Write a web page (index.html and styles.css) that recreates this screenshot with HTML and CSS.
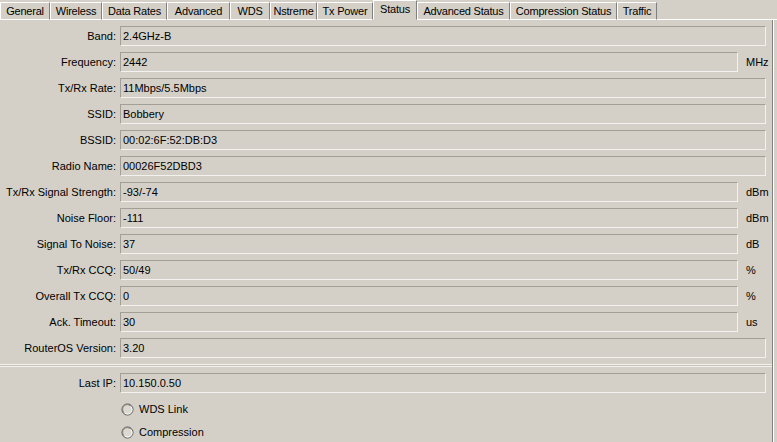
FILE: index.html
```html
<!DOCTYPE html>
<html>
<head>
<meta charset="utf-8">
<title>Interface Status</title>
<link rel="stylesheet" href="styles.css">
</head>
<body>
<div class="window">
  <div class="tabs">
    <div class="tab">General</div>
    <div class="tab">Wireless</div>
    <div class="tab">Data Rates</div>
    <div class="tab">Advanced</div>
    <div class="tab">WDS</div>
    <div class="tab">Nstreme</div>
    <div class="tab">Tx Power</div>
    <div class="tab active">Status</div>
    <div class="tab">Advanced Status</div>
    <div class="tab">Compression Status</div>
    <div class="tab">Traffic</div>
    <div class="tab-fill"></div>
  </div>
  <div class="panel">
    <div class="form">
      <label class="lbl">Band:</label><div class="field wide">2.4GHz-B</div>
      <label class="lbl">Frequency:</label><div class="field">2442</div><span class="unit">MHz</span>
      <label class="lbl">Tx/Rx Rate:</label><div class="field wide">11Mbps/5.5Mbps</div>
      <label class="lbl">SSID:</label><div class="field wide">Bobbery</div>
      <label class="lbl">BSSID:</label><div class="field wide">00:02:6F:52:DB:D3</div>
      <label class="lbl">Radio Name:</label><div class="field wide">00026F52DBD3</div>
      <label class="lbl">Tx/Rx Signal Strength:</label><div class="field">-93/-74</div><span class="unit">dBm</span>
      <label class="lbl">Noise Floor:</label><div class="field">-111</div><span class="unit">dBm</span>
      <label class="lbl">Signal To Noise:</label><div class="field">37</div><span class="unit">dB</span>
      <label class="lbl">Tx/Rx CCQ:</label><div class="field">50/49</div><span class="unit">%</span>
      <label class="lbl">Overall Tx CCQ:</label><div class="field">0</div><span class="unit">%</span>
      <label class="lbl">Ack. Timeout:</label><div class="field">30</div><span class="unit">us</span>
      <label class="lbl">RouterOS Version:</label><div class="field wide">3.20</div>
    </div>
    <div class="sep"></div>
    <div class="form">
      <label class="lbl">Last IP:</label><div class="field wide">10.150.0.50</div>
    </div>
    <div class="radios">
      <div class="radio">
        <svg class="radio-dot" width="13" height="13" viewBox="0 0 13 13">
          <circle cx="6.5" cy="6.5" r="5.5" fill="#dcd9d2" stroke="#4a4843" stroke-width="1"/>
          <path d="M3 9.5 A4.3 4.3 0 0 1 9.5 3" fill="none" stroke="#8f8c84" stroke-width="1"/>
          <path d="M9.8 3.5 A4.3 4.3 0 0 1 3.5 9.8" fill="none" stroke="#ffffff" stroke-width="1"/>
        </svg>
        <span>WDS Link</span>
      </div>
      <div class="radio">
        <svg class="radio-dot" width="13" height="13" viewBox="0 0 13 13">
          <circle cx="6.5" cy="6.5" r="5.5" fill="#dcd9d2" stroke="#4a4843" stroke-width="1"/>
          <path d="M3 9.5 A4.3 4.3 0 0 1 9.5 3" fill="none" stroke="#8f8c84" stroke-width="1"/>
          <path d="M9.8 3.5 A4.3 4.3 0 0 1 3.5 9.8" fill="none" stroke="#ffffff" stroke-width="1"/>
        </svg>
        <span>Compression</span>
      </div>
    </div>
  </div>
</div>
</body>
</html>
```
FILE: styles.css
```css
html, body {
  margin: 0;
  padding: 0;
  background: #d4d0c8;
}

body {
  font-family: "Liberation Sans", Arial, sans-serif;
  font-size: 11px;
  color: #000;
  width: 777px;
  height: 442px;
  overflow: hidden;
}

.window {
  display: flex;
  flex-direction: column;
  height: 442px;
}

/* tab strip */
.tabs {
  display: flex;
  align-items: flex-end;
  height: 20px;
}

.tab {
  box-sizing: border-box;
  height: 18px;
  line-height: 16px;
  padding: 0;
  border-top: 1px solid #fff;
  border-left: 1px solid #fff;
  border-right: 1px solid #808080;
  border-bottom: 1px solid #fff;
  white-space: nowrap;
  text-align: center;
  letter-spacing: -0.2px;
}

.tab:nth-child(1) { width: 50px; }
.tab:nth-child(2) { width: 52px; }
.tab:nth-child(3) { width: 65px; }
.tab:nth-child(4) { width: 63px; }
.tab:nth-child(5) { width: 40px; }
.tab:nth-child(6) { width: 47px; }
.tab:nth-child(7) { width: 56px; }
.tab:nth-child(8) { width: 44px; }
.tab:nth-child(9) { width: 93px; }
.tab:nth-child(10) { width: 107px; }
.tab:nth-child(11) { width: 40px; }

.tab.active {
  height: 20px;
  border-bottom: 1px solid #d4d0c8;
  padding-bottom: 2px;
}

.tab-fill {
  flex: 1;
  height: 1px;
  background: #fff;
}

/* content panel */
.panel {
  flex: 1;
  margin-right: 4px;
  border-right: 1px solid #808080;
  box-shadow: 1px 0 0 #fff;
  padding-top: 6px;
}

.form {
  display: grid;
  grid-template-columns: 116px 618px 20px;
  column-gap: 4px;
  row-gap: 6px;
  grid-auto-rows: 20px;
}

.lbl {
  text-align: right;
  line-height: 20px;
  white-space: nowrap;
}

.field {
  box-sizing: border-box;
  height: 20px;
  line-height: 18px;
  padding-left: 2px;
  border-top: 1px solid #a29f97;
  border-left: 1px solid #a29f97;
  border-bottom: 1px solid #f4f2ee;
  border-right: 1px solid #f4f2ee;
  background: #d4d0c8;
  white-space: nowrap;
  overflow: hidden;
}

.field.wide {
  grid-column: 2 / 4;
  margin-right: -4px;
}

.unit {
  line-height: 20px;
  margin-left: 4px;
  white-space: nowrap;
}

/* groove between the status block and the last-ip block */
.sep {
  box-sizing: border-box;
  height: 3px;
  margin: 6px 0 6px 0;
  border-top: 1px solid #f4f2ee;
  border-bottom: 1px solid #f4f2ee;
  background: #c6c2b9;
}

/* radio rows under the form */
.radios {
  display: flex;
  flex-direction: column;
  gap: 3px;
  margin-top: 6px;
  padding-left: 121px;
}

.radio {
  display: flex;
  align-items: center;
  gap: 5px;
  height: 20px;
}

.radio-dot {
  flex: none;
}
```
